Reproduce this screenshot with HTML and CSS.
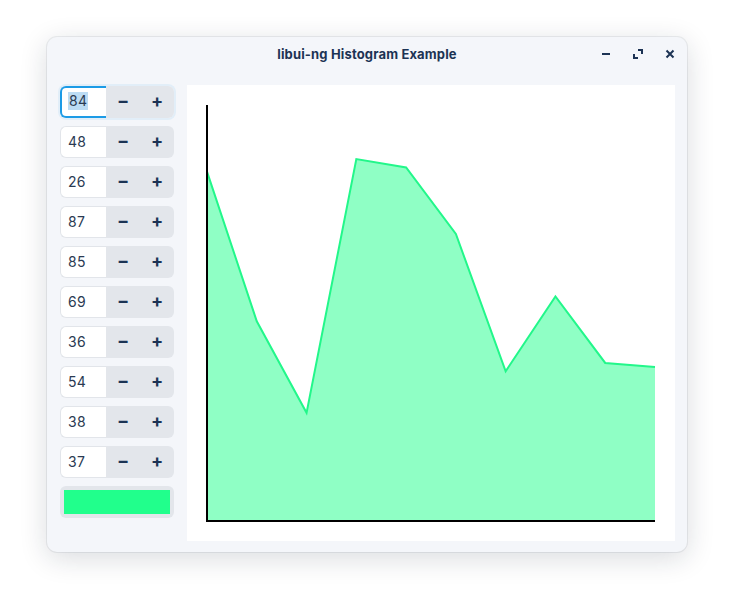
FILE: index.html
```html
<!DOCTYPE html>
<html>
<head>
<meta charset="utf-8">
<link rel="stylesheet" href="styles.css">
</head>
<body>
<div class="window">
  <div class="titlebar">
    <div class="title">libui-ng Histogram Example</div>
    <div class="controls">
      <svg class="ctl" width="16" height="16" viewBox="0 0 16 16"><rect x="4" y="7" width="8" height="2" fill="#1c3354"/></svg>
      <svg class="ctl" width="16" height="16" viewBox="0 0 16 16"><path d="M8 4h4v4M8 12H4V8" fill="none" stroke="#1c3354" stroke-width="2" stroke-linecap="butt"/></svg>
      <svg class="ctl" width="16" height="16" viewBox="0 0 16 16"><path d="M4.5 4.5l7 7M11.5 4.5l-7 7" fill="none" stroke="#1c3354" stroke-width="2"/></svg>
    </div>
  </div>
  <div class="content">
    <div class="sidebar">
      <div class="spin focused"><div class="field"><span class="sel">84</span></div><div class="btns"><span class="btn">−</span><span class="btn">+</span></div></div>
      <div class="spin"><div class="field">48</div><div class="btns"><span class="btn">−</span><span class="btn">+</span></div></div>
      <div class="spin"><div class="field">26</div><div class="btns"><span class="btn">−</span><span class="btn">+</span></div></div>
      <div class="spin"><div class="field">87</div><div class="btns"><span class="btn">−</span><span class="btn">+</span></div></div>
      <div class="spin"><div class="field">85</div><div class="btns"><span class="btn">−</span><span class="btn">+</span></div></div>
      <div class="spin"><div class="field">69</div><div class="btns"><span class="btn">−</span><span class="btn">+</span></div></div>
      <div class="spin"><div class="field">36</div><div class="btns"><span class="btn">−</span><span class="btn">+</span></div></div>
      <div class="spin"><div class="field">54</div><div class="btns"><span class="btn">−</span><span class="btn">+</span></div></div>
      <div class="spin"><div class="field">38</div><div class="btns"><span class="btn">−</span><span class="btn">+</span></div></div>
      <div class="spin"><div class="field">37</div><div class="btns"><span class="btn">−</span><span class="btn">+</span></div></div>
      <div class="colorbtn"><div class="swatch"></div></div>
    </div>
    <div class="canvas">
      <svg width="488" height="456" viewBox="0 0 488 456">
        <path d="M20 436 L20 86.56 L69.78 236.32 L119.56 327.84 L169.33 74.08 L219.11 82.4 L268.89 148.96 L318.67 286.24 L368.44 211.36 L418.22 277.92 L468 282.08 L468 436 Z" fill="#8fffc5"/>
        <path d="M20 86.56 L69.78 236.32 L119.56 327.84 L169.33 74.08 L219.11 82.4 L268.89 148.96 L318.67 286.24 L368.44 211.36 L418.22 277.92 L468 282.08" fill="none" stroke="#22f78a" stroke-width="2" stroke-linejoin="miter"/>
        <path d="M20 20 L20 436 L468 436" fill="none" stroke="#000" stroke-width="2"/>
      </svg>
    </div>
  </div>
</div>
</body>
</html>
```
FILE: styles.css
```css
html, body {
  margin: 0;
  padding: 0;
  background: #ffffff;
}
body {
  width: 734px;
  height: 610px;
  font-family: Inter, "Noto Sans", sans-serif;
}
.window {
  position: absolute;
  left: 47px;
  top: 37px;
  width: 640px;
  height: 515px;
  box-sizing: border-box;
  background: #f4f6fa;
  border-radius: 10px;
  box-shadow: 0 6px 28px rgba(20, 30, 50, 0.16), 0 0 0 1px rgba(20, 30, 50, 0.07);
  display: flex;
  flex-direction: column;
}
.titlebar {
  height: 34px;
  display: flex;
  align-items: center;
  justify-content: center;
  position: relative;
}
.title {
  font-size: 13px;
  font-weight: 700;
  color: #1c3354;
  letter-spacing: 0.15px;
}
.controls {
  position: absolute;
  right: 9px;
  top: 9px;
  display: flex;
  gap: 16px;
}
.ctl { display: block; }
.content {
  flex: 1;
  display: flex;
  padding: 14px 12px 11px 13px;
  gap: 13px;
}
.sidebar {
  width: 114px;
  padding-top: 1px;
  display: flex;
  flex-direction: column;
  gap: 8px;
}
.spin {
  height: 32px;
  display: flex;
  border-radius: 6px;
  box-sizing: border-box;
}
.field {
  width: 46px;
  box-sizing: border-box;
  background: #ffffff;
  border: 1px solid #e2e5ea;
  border-right: none;
  border-radius: 6px 0 0 6px;
  font-size: 14px;
  color: #2a3a52;
  display: flex;
  align-items: center;
  padding-left: 7px;
  padding-bottom: 2px;
  letter-spacing: 0.3px;
}
.btns {
  flex: 1;
  display: flex;
  background: #e3e6eb;
  border-radius: 0 6px 6px 0;
}
.btn {
  flex: 1;
  display: flex;
  align-items: center;
  justify-content: center;
  font-size: 18px;
  font-weight: 700;
  color: #1c3354;
  padding-bottom: 3px;
}
.focused {
  box-shadow: 0 0 0 2px rgba(28, 155, 230, 0.08);
}
.focused .field {
  border: 2px solid #1c9be6;
  border-right: none;
  padding-left: 6px;
}
.sel {
  background: #bcdcf4;
  padding: 0 1px;
  line-height: 18px;
}
.colorbtn {
  height: 32px;
  box-sizing: border-box;
  background: #e3e6eb;
  border-radius: 6px;
  padding: 4px;
}
.swatch {
  height: 100%;
  background: #21ff8c;
}
.canvas {
  width: 488px;
  height: 456px;
  background: #ffffff;
}
.canvas svg { display: block; }
```
